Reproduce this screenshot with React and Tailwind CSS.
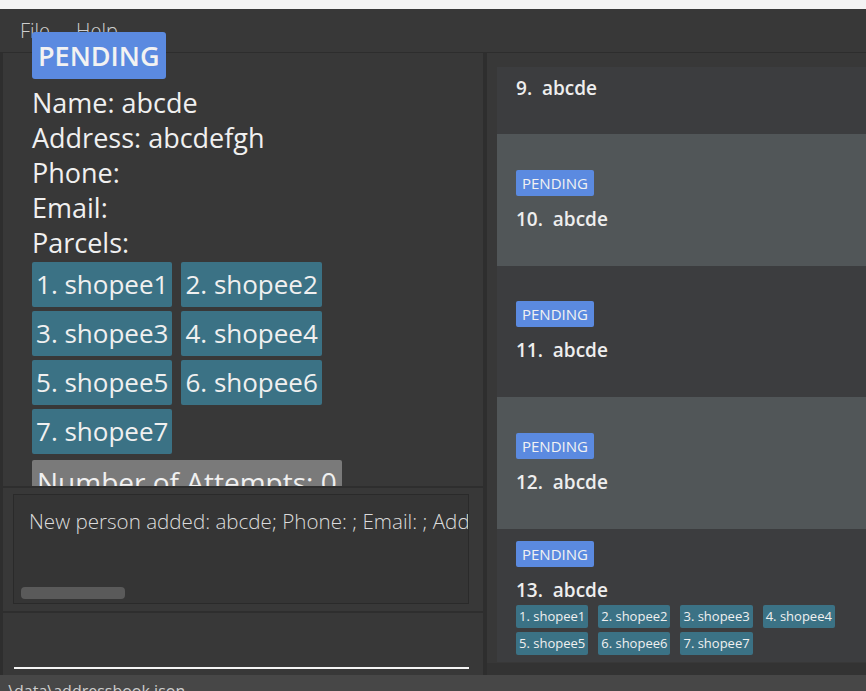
import React from "react";

const font = { fontFamily: '"Segoe UI", "Open Sans", "Noto Sans", sans-serif' };

const parcels = ["shopee1", "shopee2", "shopee3", "shopee4", "shopee5", "shopee6", "shopee7"];

const cards = [
  { idx: 9, pending: false, light: false, parcels: false, h: "h-[67px]" },
  { idx: 10, pending: true, light: true, parcels: false, h: "h-[132px]" },
  { idx: 11, pending: true, light: false, parcels: false, h: "h-[131px]" },
  { idx: 12, pending: true, light: true, parcels: false, h: "h-[132px]" },
  { idx: 13, pending: true, light: false, parcels: true, h: "h-[133px]" },
];

const PersonCard = ({ card }) => (
  <div
    className={`${card.h} ${card.light ? "bg-[#515658]" : "bg-[#3c3d3f]"} flex flex-col ${
      card.idx === 9 ? "justify-start pt-[9px]" : card.parcels ? "justify-start pt-[12px]" : "justify-center"
    } pl-[19px] pr-2`}
  >
    {card.pending && (
      <div className="self-start bg-[#5b8ae0] text-[#f2f2f2] text-[15px] leading-[26px] px-[6px] rounded-[2px]">
        PENDING
      </div>
    )}
    <div className={`text-[19px] font-semibold text-[#eeeeee] leading-[24px] ${card.pending ? "mt-[11px]" : ""}`}>
      {card.idx}.&nbsp; abcde
    </div>
    {card.parcels && (
      <div className="flex flex-wrap gap-x-[10px] gap-y-[4px] mt-[3px] w-[340px]">
        {parcels.map((p, i) => (
          <span
            key={p}
            className="bg-[#3b7285] text-[#f0f0f0] text-[13px] leading-[23px] px-[3px] rounded-[2px]"
          >
            {i + 1}. {p}
          </span>
        ))}
      </div>
    )}
  </div>
);

export default function App() {
  return (
    <div className="w-[866px] h-[691px] overflow-hidden flex flex-col bg-[#383838]" style={font}>
      <div className="h-[9px] bg-[#f3f3f3]" />
      {/* menu bar */}
      <div className="h-[44px] bg-[#383838] border-b border-[#2d2d2d] flex items-center gap-[26px] pl-[20px] text-[20px] font-light text-[#cfcfcf]">
        <span>File</span>
        <span>Help</span>
      </div>

      <div className="flex-1 flex min-h-0">
        {/* left column */}
        <div className="w-[487px] flex flex-col border-l-[3px] border-[#2e2e2e]">
          {/* detail panel */}
          <div className="h-[433px] border-r-[4px] border-[#2e2e2e] pl-[29px]">
            <div className="-mt-[21px] flex flex-col items-start text-[#f0f0f0]">
              <div className="bg-[#5b8ae0] text-[27px] font-semibold leading-[47px] px-[6px] rounded-[3px] text-[#f2f2f2]">
                PENDING
              </div>
              <div className="mt-[6px] text-[27px] leading-[35px]">
                <div>Name: abcde</div>
                <div>Address: abcdefgh</div>
                <div>Phone:</div>
                <div>Email:</div>
                <div>Parcels:</div>
              </div>
              <div className="flex flex-wrap gap-x-[9px] gap-y-[4px] w-[320px] mt-[2px]">
                {parcels.map((p, i) => (
                  <span
                    key={p}
                    className="bg-[#3b7285] text-[26px] leading-[45px] px-[4px] rounded-[2px] text-[#f0f0f0]"
                  >
                    {i + 1}. {p}
                  </span>
                ))}
              </div>
              <div className="mt-[6px] bg-[#7a7a7a] text-[28px] leading-[45px] px-[5px] rounded-[2px] text-[#f0f0f0]">
                Number of Attempts: 0
              </div>
            </div>
          </div>

          {/* result display */}
          <div className="relative z-10 h-[125px] bg-[#383838] border-t-[2px] border-r-[4px] border-[#2e2e2e] pl-[10px] pr-[14px] pt-[6px] pb-[7px]">
            <div className="h-full bg-[#353535] border border-[#2a2a2a] overflow-hidden relative">
              <div className="pl-[15px] pt-[11px] text-[20.6px] font-light text-[#dcdcdc] whitespace-nowrap">
                New person added: abcde; Phone: ; Email: ; Address: abcdefgh
              </div>
              <div className="absolute left-[7px] bottom-[4px] w-[104px] h-[12px] rounded-[4px] bg-[#5a5a5a]" />
            </div>
          </div>

          {/* command box */}
          <div className="relative z-10 flex-1 bg-[#383838] border-t-[2px] border-r-[4px] border-[#2e2e2e] flex items-end pl-[11px] pr-[14px] pb-[6px]">
            <div className="w-full h-[2px] bg-[#f5f5f5]" />
          </div>
        </div>

        {/* right column */}
        <div className="flex-1 bg-[#383838] pl-[10px] pt-[14px] flex flex-col border-b-[12px] border-[#333333]">
          {cards.map((c) => (
            <PersonCard key={c.idx} card={c} />
          ))}
        </div>
      </div>

      {/* status bar */}
      <div className="h-[16px] bg-[#474747] overflow-hidden">
        <div className="pl-[4px] pt-[6px] text-[16px] leading-[20px] text-[#cfcfcf] whitespace-nowrap">
          .\data\addressbook.json
        </div>
      </div>
    </div>
  );
}
